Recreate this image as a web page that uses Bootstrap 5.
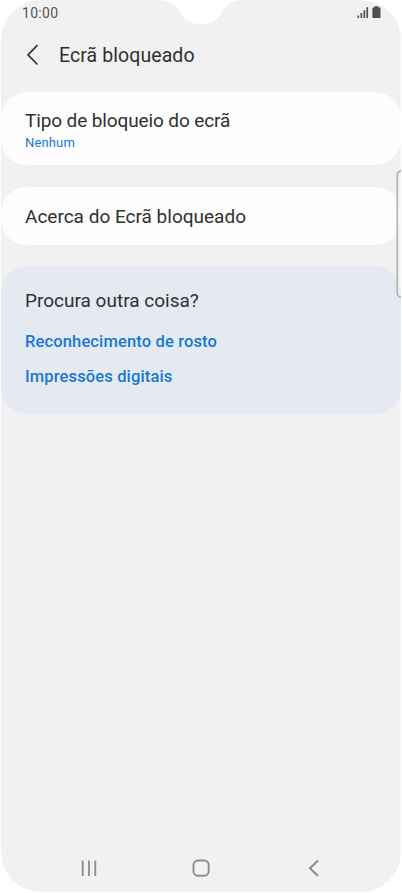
<!DOCTYPE html>
<html lang="pt">
<head>
<meta charset="utf-8">
<meta name="viewport" content="width=device-width, initial-scale=1">
<title>Ecrã bloqueado</title>
<link href="https://cdn.jsdelivr.net/npm/bootstrap@5.3.0/dist/css/bootstrap.min.css" rel="stylesheet">
<style>
  body { background: #fff; font-family: Roboto, sans-serif; color: #303030; }
  .phone { width: 400px; height: 892px; margin-left: 1px; background: #f1f1f1; border-radius: 40px; }
  .notch { left: 158px; top: 0; }
  .status { height: 26px; padding: 0 20px 0 21px; font-size: 14px; line-height: 26px; color: #555; letter-spacing: .3px; }
  .titlebar { height: 66px; padding: 0 24px 8px 25px; }
  .titlebar h1 { font-size: 19.5px; line-height: 24px; font-weight: 400; margin-left: 18px; padding-top: 2px; letter-spacing: .08px; }
  .panel { border: 0; border-radius: 26px; padding: 0 24px; background: #fdfdfd; color: inherit; }
  .lock-type { height: 73px; margin-bottom: 22px; padding-top: 17px; }
  .lock-type .label { letter-spacing: -.12px; }
  .about { height: 58px; margin-bottom: 21px; padding-top: 18px; }
  .related { height: 148px; padding-top: 23px; background: #e5eaf2; }
  .label { font-size: 19px; line-height: 23px; font-weight: 400; }
  .value { font-size: 13px; line-height: 16px; margin-top: 3px; color: #1579d4; letter-spacing: .15px; }
  .related a { font-size: 16.5px; line-height: 20px; font-weight: 500; color: #1579d4; letter-spacing: .14px; }
  .related .links { margin-top: 20px; gap: 15px; }
  .edge-handle { left: 395px; top: 170px; }
  .navkeys { height: 49px; padding: 0 32px; }
</style>
</head>
<body>
<div class="phone d-flex flex-column position-relative overflow-hidden">
  <svg class="notch position-absolute" width="84" height="25" viewBox="0 0 84 25"><path d="M0 0C14 1 18 6 22 14C26 21 33 24 42 24S58 21 62 14C66 6 70 1 84 0Z" fill="#fff"/></svg>

  <div class="status d-flex justify-content-between align-items-start">
    <span>10:00</span>
    <svg width="24" height="20" viewBox="0 0 24 20" fill="#4f4f4f">
      <path d="M.5 15.5h1.6V18H.5zM3.5 13h1.7v5H3.5zM6.5 10.2h1.7V18H6.5zM9.4 7.2h1.7V18H9.4z"/>
      <path d="M17.3 6.3h4.2v1.2h1.2q.8 0 .8.8v8.9q0 .8-.8.8h-6.5q-.8 0-.8-.8V8.3q0-.8.8-.8h1.1z"/>
    </svg>
  </div>

  <header class="titlebar d-flex align-items-center">
    <svg width="15" height="22" viewBox="0 0 15 22" fill="none" stroke="#333" stroke-width="1.7" stroke-linecap="round" stroke-linejoin="round"><path d="M11 1.600L2 10.800L11 20"/></svg>
    <h1 class="mb-0">Ecrã bloqueado</h1>
  </header>

  <main class="flex-grow-1">
    <section class="panel lock-type">
      <h2 class="label mb-0">Tipo de bloqueio do ecrã</h2>
      <p class="value mb-0">Nenhum</p>
    </section>
    <section class="panel about">
      <h2 class="label mb-0">Acerca do Ecrã bloqueado</h2>
    </section>
    <section class="panel related">
      <h2 class="label mb-0">Procura outra coisa?</h2>
      <div class="links d-flex flex-column align-items-start">
        <a class="text-decoration-none" href="#">Reconhecimento de rosto</a>
        <a class="text-decoration-none" href="#">Impressões digitais</a>
      </div>
    </section>
  </main>

  <svg class="edge-handle position-absolute" width="5" height="128" viewBox="0 0 5 128" fill="none" stroke="#aaa" stroke-width="1.4"><path d="M5 .8Q1.200 1.500 1.200 6V122Q1.200 126.500 5 127.200" fill="#f4f4f4" fill-opacity=".6"/></svg>

  <nav class="navkeys d-flex align-items-start justify-content-around">
    <svg width="18" height="50" viewBox="0 0 18 50" stroke="#8b8b8b" stroke-width="1.8"><path d="M2.700 17.500V33M9 17.500V33M15.300 17.500V33"/></svg>
    <svg width="18" height="50" viewBox="0 0 18 50" fill="none" stroke="#8b8b8b" stroke-width="1.9"><rect x="1.500" y="17.500" width="15.200" height="15.200" rx="4.500"/></svg>
    <svg width="18" height="50" viewBox="0 0 18 50" fill="none" stroke="#8b8b8b" stroke-width="1.9"><path d="M14 17.500L6 25.200L14 33"/></svg>
  </nav>
</div>
<script src="https://cdn.jsdelivr.net/npm/bootstrap@5.3.0/dist/js/bootstrap.bundle.min.js"></script>
</body>
</html>
